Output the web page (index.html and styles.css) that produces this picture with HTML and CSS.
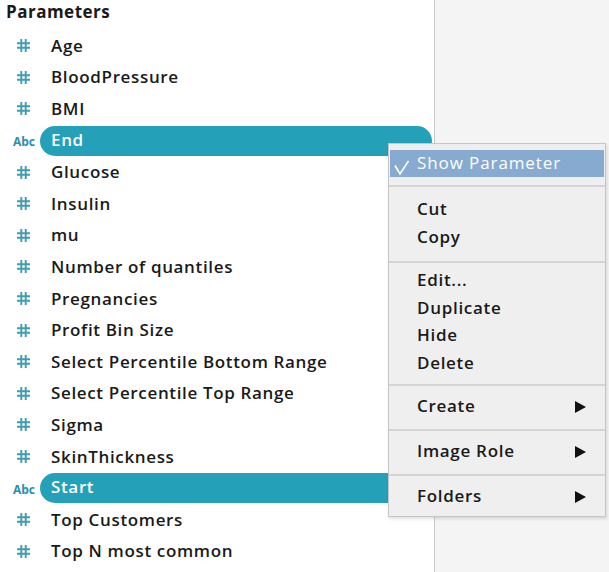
FILE: index.html
```html
<!DOCTYPE html>
<html>
<head>
<meta charset="utf-8">
<link rel="stylesheet" href="styles.css">
</head>
<body>
<div class="screen">
  <div class="panel">
    <div class="title">Parameters</div>
    <ul class="list">
      <li class="row"><span class="ic"><svg class="hash" viewBox="0 0 13 13"><path d="M4.3 0v13M8.7 0v13M0 4.3h13M0 8.7h13"/></svg></span><span class="name">Age</span></li>
      <li class="row"><span class="ic"><svg class="hash" viewBox="0 0 13 13"><path d="M4.3 0v13M8.7 0v13M0 4.3h13M0 8.7h13"/></svg></span><span class="name">BloodPressure</span></li>
      <li class="row"><span class="ic"><svg class="hash" viewBox="0 0 13 13"><path d="M4.3 0v13M8.7 0v13M0 4.3h13M0 8.7h13"/></svg></span><span class="name">BMI</span></li>
      <li class="row sel"><span class="ic abc">Abc</span><span class="name">End</span></li>
      <li class="row"><span class="ic"><svg class="hash" viewBox="0 0 13 13"><path d="M4.3 0v13M8.7 0v13M0 4.3h13M0 8.7h13"/></svg></span><span class="name">Glucose</span></li>
      <li class="row"><span class="ic"><svg class="hash" viewBox="0 0 13 13"><path d="M4.3 0v13M8.7 0v13M0 4.3h13M0 8.7h13"/></svg></span><span class="name">Insulin</span></li>
      <li class="row"><span class="ic"><svg class="hash" viewBox="0 0 13 13"><path d="M4.3 0v13M8.7 0v13M0 4.3h13M0 8.7h13"/></svg></span><span class="name">mu</span></li>
      <li class="row"><span class="ic"><svg class="hash" viewBox="0 0 13 13"><path d="M4.3 0v13M8.7 0v13M0 4.3h13M0 8.7h13"/></svg></span><span class="name">Number of quantiles</span></li>
      <li class="row"><span class="ic"><svg class="hash" viewBox="0 0 13 13"><path d="M4.3 0v13M8.7 0v13M0 4.3h13M0 8.7h13"/></svg></span><span class="name">Pregnancies</span></li>
      <li class="row"><span class="ic"><svg class="hash" viewBox="0 0 13 13"><path d="M4.3 0v13M8.7 0v13M0 4.3h13M0 8.7h13"/></svg></span><span class="name">Profit Bin Size</span></li>
      <li class="row"><span class="ic"><svg class="hash" viewBox="0 0 13 13"><path d="M4.3 0v13M8.7 0v13M0 4.3h13M0 8.7h13"/></svg></span><span class="name">Select Percentile Bottom Range</span></li>
      <li class="row"><span class="ic"><svg class="hash" viewBox="0 0 13 13"><path d="M4.3 0v13M8.7 0v13M0 4.3h13M0 8.7h13"/></svg></span><span class="name">Select Percentile Top Range</span></li>
      <li class="row"><span class="ic"><svg class="hash" viewBox="0 0 13 13"><path d="M4.3 0v13M8.7 0v13M0 4.3h13M0 8.7h13"/></svg></span><span class="name">Sigma</span></li>
      <li class="row"><span class="ic"><svg class="hash" viewBox="0 0 13 13"><path d="M4.3 0v13M8.7 0v13M0 4.3h13M0 8.7h13"/></svg></span><span class="name">SkinThickness</span></li>
      <li class="row sel"><span class="ic abc">Abc</span><span class="name">Start</span></li>
      <li class="row"><span class="ic"><svg class="hash" viewBox="0 0 13 13"><path d="M4.3 0v13M8.7 0v13M0 4.3h13M0 8.7h13"/></svg></span><span class="name">Top Customers</span></li>
      <li class="row"><span class="ic"><svg class="hash" viewBox="0 0 13 13"><path d="M4.3 0v13M8.7 0v13M0 4.3h13M0 8.7h13"/></svg></span><span class="name">Top N most common</span></li>
    </ul>
  </div>
  <div class="side"></div>

  <div class="menu">
    <div class="sec sec-first">
      <div class="item active"><svg class="check" viewBox="0 0 16 16"><path d="M1 5.5L6 14L14.5 1"/></svg>Show Parameter</div>
    </div>
    <div class="sec sec-clip">
      <div class="item">Cut</div>
      <div class="item">Copy</div>
    </div>
    <div class="sec sec-edit">
      <div class="item">Edit...</div>
      <div class="item">Duplicate</div>
      <div class="item">Hide</div>
      <div class="item">Delete</div>
    </div>
    <div class="sec sec-sub">
      <div class="item">Create<span class="arrow"></span></div>
    </div>
    <div class="sec sec-sub">
      <div class="item">Image Role<span class="arrow"></span></div>
    </div>
    <div class="sec sec-last">
      <div class="item">Folders<span class="arrow"></span></div>
    </div>
  </div>
</div>
</body>
</html>
```

FILE: styles.css
```css
* { box-sizing: border-box; }
html, body { margin: 0; padding: 0; }
body {
  width: 609px;
  height: 572px;
  overflow: hidden;
  font-family: "Open Sans", "Noto Sans", sans-serif;
  background: #f4f4f4;
}
.screen {
  position: relative;
  display: flex;
  width: 609px;
  height: 572px;
}
.panel {
  width: 435px;
  flex: none;
  background: #ffffff;
  border-right: 1px solid #c9c9c9;
}
.side {
  flex: 1;
  background: #f4f4f4;
}
.title {
  height: 30px;
  padding-left: 6px;
  font-size: 17px;
  font-weight: 700;
  letter-spacing: 0.5px;
  color: #1a1a1a;
  line-height: 24px;
}
.list {
  list-style: none;
  margin: 0;
  padding: 0;
}
.row {
  display: flex;
  align-items: center;
  height: 31.6px;
}
.ic {
  width: 40px;
  flex: none;
  display: flex;
  justify-content: center;
  align-items: center;
  padding-left: 6px;
}
.hash {
  width: 13px;
  height: 13px;
  stroke: #3f9cb3;
  stroke-width: 1.9;
  fill: none;
}
.abc {
  font-size: 12px;
  font-weight: 700;
  color: #2a8db0;
  padding-left: 8px;
  padding-top: 2px;
}
.name {
  flex: 1;
  height: 30px;
  line-height: 30px;
  padding-left: 11px;
  font-size: 17px;
  font-weight: 600;
  letter-spacing: 0.65px;
  color: #1a1a1a;
  margin-right: 2px;
}
.sel .name {
  background: #25a0b9;
  color: #ffffff;
  border-radius: 15px;
  line-height: 28px;
}

.menu {
  position: absolute;
  left: 388px;
  top: 143px;
  width: 218px;
  background: #efefef;
  border: 1px solid #c6c6c6;
  box-shadow: 1px 2px 3px rgba(0,0,0,0.12);
  font-size: 17px;
  font-weight: 600;
  letter-spacing: 0.7px;
  color: #1a1a1a;
}
.sec {
  border-top: 2px solid #d4d4d4;
}
.sec:first-child { border-top: none; }
.sec-first { padding: 6px 1px 8px; }
.sec-clip { padding: 8px 0 10px; }
.sec-edit { padding: 3px 0 8px; }
.sec-sub { padding: 6px 0 9px; }
.sec-last { padding: 6px 0 6px; }
.item {
  position: relative;
  height: 28px;
  line-height: 28px;
  padding-left: 28px;
}
.sec-edit .item { height: 27.6px; line-height: 27.6px; }
.item.active {
  height: 27px;
  line-height: 26px;
  background: #87abd0;
  color: #ffffff;
  font-weight: 500;
  letter-spacing: 0.9px;
  padding-left: 27px;
}
.check {
  position: absolute;
  left: 4px;
  top: 10px;
  width: 16px;
  height: 16px;
  fill: none;
  stroke: #ffffff;
  stroke-width: 1.7;
}
.arrow {
  position: absolute;
  right: 19px;
  top: 9px;
  width: 0;
  height: 0;
  border-top: 6px solid transparent;
  border-bottom: 6px solid transparent;
  border-left: 11px solid #111;
}
```
